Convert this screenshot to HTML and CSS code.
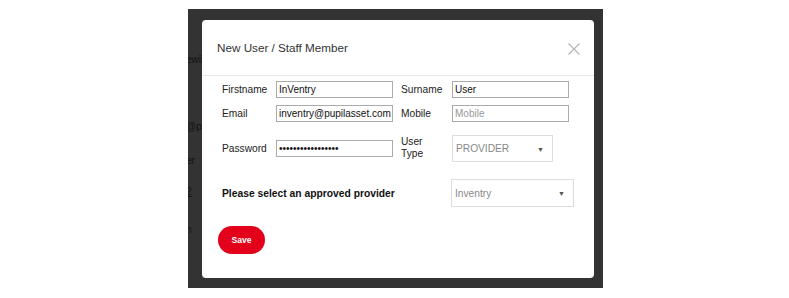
FILE: index.html
```html
<!DOCTYPE html>
<html lang="en">
<head>
    <meta charset="UTF-8">
    <meta name="viewport" content="width=device-width, initial-scale=1.0">
    <title>New User / Staff Member</title>
    <link rel="stylesheet" href="styles.css">
</head>
<body>
    <div class="backdrop">
        <div class="page-behind">
            <p class="l1">ewil</p>
            <p class="l2">@p</p>
            <p class="l3">er</p>
            <p class="l4">2</p>
            <p class="l5">n</p>
        </div>

        <div class="modal">
            <div class="modal-header">
                <h4>New User / Staff Member</h4>
                <button class="close" type="button" aria-label="Close">
                    <svg width="12" height="12" viewBox="0 0 12 12">
                        <path d="M0.5 0.5 L11.5 11.5 M11.5 0.5 L0.5 11.5" stroke="#b3b3b3" stroke-width="1.1" fill="none"/>
                    </svg>
                </button>
            </div>
            <form class="modal-body" id="userForm">
                <div class="grid">
                    <label for="firstName">Firstname</label>
                    <input type="text" id="firstName" value="InVentry">
                    <label for="surname">Surname</label>
                    <input type="text" id="surname" value="User">

                    <label for="email">Email</label>
                    <input type="email" id="email" value="inventry@pupilasset.com">
                    <label for="mobile">Mobile</label>
                    <input type="text" id="mobile" placeholder="Mobile">

                    <label for="password" class="pw-label">Password</label>
                    <input type="password" id="password" class="pw" value="abcdefghijklmnopq">
                    <label for="userType" class="wrap">User Type</label>
                    <div class="select-box small">
                        <select id="userType">
                            <option>PROVIDER</option>
                        </select>
                    </div>
                </div>

                <div class="provider-row">
                    <span class="provider-label">Please select an approved provider</span>
                    <div class="select-box wide">
                        <select id="provider">
                            <option>Inventry</option>
                        </select>
                    </div>
                </div>

                <button type="submit" class="save">Save</button>
            </form>
        </div>
    </div>
</body>
</html>
```

FILE: styles.css
```css
body {
    margin: 0;
    background: #fff;
    font-family: "Liberation Sans", Arial, sans-serif;
}
.backdrop {
    position: relative;
    margin: 9px 0 0 188px;
    width: 415px;
    height: 279px;
    background-color: #333;
    overflow: hidden;
}
.page-behind p {
    margin: 0 0 0 -2px;
    font-size: 10px;
    color: #111;
    height: 12px;
    line-height: 12px;
}
.page-behind .l1 { margin-top: 45px; }
.page-behind .l2 { margin-top: 55px; }
.page-behind .l3 { margin-top: 22px; }
.page-behind .l4 { margin-top: 19px; text-decoration: underline; }
.page-behind .l5 { margin-top: 26px; }

.modal {
    position: absolute;
    left: 14px;
    top: 11px;
    width: 392px;
    height: 258px;
    background: #fff;
    border-radius: 4px;
}
.modal-header {
    display: flex;
    align-items: center;
    justify-content: space-between;
    height: 55px;
    padding: 0 15px;
    border-bottom: 1px solid #e8e8e8;
}
.modal-header h4 {
    margin: 0;
    font-size: 11.7px;
    font-weight: normal;
    color: #333;
}
.close {
    background: none;
    border: none;
    padding: 0;
    margin-right: -1px;
    margin-top: 2px;
    width: 12px;
    height: 12px;
    display: flex;
}
.modal-body {
    padding: 5px 20px 0 16px;
    font-size: 10.2px;
    color: #222;
}
.grid {
    display: grid;
    grid-template-columns: 54px 125px 51px 117px;
    row-gap: 7px;
    align-items: center;
    justify-items: start;
    padding-left: 4px;
}
.grid label {
    color: #222;
}
.grid input {
    box-sizing: border-box;
    width: 117px;
    height: 17px;
    padding: 0 1px 0 2px;
    border: 1px solid #ababab;
    font-family: "Liberation Sans", Arial, sans-serif;
    font-size: 10px;
    color: #111;
}
.grid input::placeholder {
    color: #999;
}
.grid input.pw {
    margin-top: 6px;
}
.pw-label {
    margin-top: 6px;
}
.wrap {
    max-width: 40px;
    line-height: 12px;
    margin-top: 4px;
}
.select-box {
    position: relative;
    box-sizing: border-box;
    border: 1px solid #dcdcdc;
    background: #fff;
}
.select-box::after {
    content: "\25BC";
    position: absolute;
    right: 8px;
    top: 50%;
    transform: translateY(-50%);
    font-size: 7px;
    color: #555;
    pointer-events: none;
}
.select-box select {
    appearance: none;
    -webkit-appearance: none;
    border: none;
    background: transparent;
    width: 100%;
    height: 100%;
    padding: 0 3px;
    font-family: "Liberation Sans", Arial, sans-serif;
    font-size: 10.2px;
    color: #888;
    outline: none;
}
.select-box.small {
    width: 101px;
    height: 27px;
    margin-top: 6px;
}
.select-box.wide {
    width: 123px;
    height: 28px;
}
.provider-row {
    display: flex;
    align-items: center;
    justify-content: space-between;
    margin-top: 17px;
    padding-left: 4px;
}
.provider-label {
    font-weight: bold;
    font-size: 10.3px;
    color: #111;
}
.save {
    margin-top: 19px;
    margin-left: 0;
    width: 47px;
    height: 28px;
    border: none;
    border-radius: 14px;
    background-color: #e2001a;
    color: #fff;
    font-family: "Liberation Sans", Arial, sans-serif;
    font-weight: bold;
    font-size: 8.6px;
    cursor: pointer;
}
```
